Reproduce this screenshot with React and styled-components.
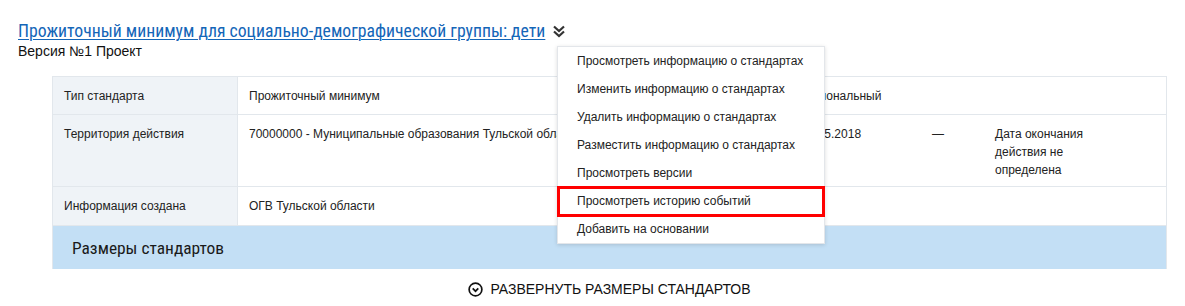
import React from 'react';
import styled, { createGlobalStyle } from 'styled-components';

const Global = createGlobalStyle`
  html, body { margin: 0; padding: 0; background: #fff; }
  body { font-family: "Liberation Sans", Arial, sans-serif; color: #222; }
`;

const Page = styled.div`
  padding: 20px 18px 0 18px;
`;

const Header = styled.div`
  position: relative;
`;

const TitleRow = styled.div`
  display: flex;
  align-items: center;
  gap: 7px;
  height: 22px;
`;

const TitleLink = styled.a`
  font-family: "Liberation Sans Narrow", "Roboto Condensed", "Liberation Sans", sans-serif;
  font-size: 17.7px;
  color: #1466b8;
  text-decoration: underline;
  text-underline-offset: 2px;
  text-decoration-thickness: 1px;
`;

const Version = styled.div`
  font-size: 14px;
  line-height: 19px;
  color: #111;
`;

const Menu = styled.ul`
  position: absolute;
  left: 539px;
  top: 26px;
  width: 266px;
  margin: 0;
  padding: 0;
  list-style: none;
  background: #fff;
  border: 1px solid #e3e6ea;
  box-shadow: 0 1px 4px rgba(0, 0, 0, 0.14);
  z-index: 5;
`;

const MenuItem = styled.li`
  position: relative;
  height: 28px;
  display: flex;
  align-items: center;
  padding-left: 19px;
  font-size: 12px;
  color: #222;
  white-space: nowrap;

  ${(p) => p.$marked && `
    &::after {
      content: '';
      position: absolute;
      left: -1px;
      right: -1px;
      top: -1px;
      bottom: -2px;
      border: 3px solid #f00;
    }
  `}
`;

const Body = styled.div`
  margin: 15px 0 0 34px;
`;

const Table = styled.div`
  border: 1px solid #e2e7ec;
  border-bottom: none;
`;

const Row = styled.div`
  box-sizing: border-box;
  display: grid;
  grid-template-columns: 185px 552px 131px 63px 122px 1fr;
  grid-template-rows: minmax(0, 1fr);
  border-bottom: 1px solid #e2e7ec;
  height: ${(p) => p.$h}px;
`;

const Cell = styled.div`
  padding: 10px 11px 0;
  font-size: 12px;
  line-height: 18px;
  color: #222;
  background: ${(p) => (p.$label ? '#eff3f7' : '#fff')};
  border-right: ${(p) => (p.$label ? '1px solid #e2e7ec' : 'none')};
  grid-column: ${(p) => p.$span || 'auto'};
`;

const Band = styled.div`
  background: #c3dff5;
  height: 43px;
  display: flex;
  align-items: center;
  padding-left: 19px;
  font-family: "Liberation Sans Narrow", "Roboto Condensed", "Liberation Sans", sans-serif;
  font-size: 17.4px;
  color: #1a1a1a;
`;

const Expand = styled.div`
  display: flex;
  justify-content: center;
  align-items: center;
  gap: 7px;
  margin-top: 12px;
  font-size: 14px;
  color: #111;
`;

const DoubleChevron = () => (
  <svg width="14" height="14" viewBox="0 0 14 14" fill="none" stroke="#333" strokeWidth="2.2">
    <polyline points="2,2.5 7,7 12,2.5" />
    <polyline points="2,7.5 7,12 12,7.5" />
  </svg>
);

const CircleChevron = () => (
  <svg width="15" height="15" viewBox="0 0 16 16" fill="none" stroke="#111" strokeWidth="1.8">
    <circle cx="8" cy="8" r="6.8" />
    <polyline points="5,6.8 8,9.8 11,6.8" />
  </svg>
);

const menuItems = [
  'Просмотреть информацию о стандартах',
  'Изменить информацию о стандартах',
  'Удалить информацию о стандартах',
  'Разместить информацию о стандартах',
  'Просмотреть версии',
  'Просмотреть историю событий',
  'Добавить на основании',
];

export default function App() {
  return (
    <>
      <Global />
      <Page>
        <Header>
          <TitleRow>
            <TitleLink href="#">Прожиточный минимум для социально-демографической группы: дети</TitleLink>
            <DoubleChevron />
          </TitleRow>
          <Version>Версия №1 Проект</Version>
          <Menu>
            {menuItems.map((t, i) => (
              <MenuItem key={t} $marked={i === 5}>{t}</MenuItem>
            ))}
          </Menu>
        </Header>
        <Body>
          <Table>
            <Row $h={38}>
              <Cell $label>Тип стандарта</Cell>
              <Cell>Прожиточный минимум</Cell>
              <Cell $span="3 / span 4">Региональный</Cell>
            </Row>
            <Row $h={72}>
              <Cell $label>Территория действия</Cell>
              <Cell>70000000 - Муниципальные образования Тульской области</Cell>
              <Cell>01.05.2018</Cell>
              <Cell>—</Cell>
              <Cell>Дата окончания действия не определена</Cell>
              <Cell />
            </Row>
            <Row $h={39}>
              <Cell $label>Информация создана</Cell>
              <Cell $span="2 / span 5">ОГВ Тульской области</Cell>
            </Row>
            <Band>Размеры стандартов</Band>
          </Table>
          <Expand>
            <CircleChevron />
            РАЗВЕРНУТЬ РАЗМЕРЫ СТАНДАРТОВ
          </Expand>
        </Body>
      </Page>
    </>
  );
}
